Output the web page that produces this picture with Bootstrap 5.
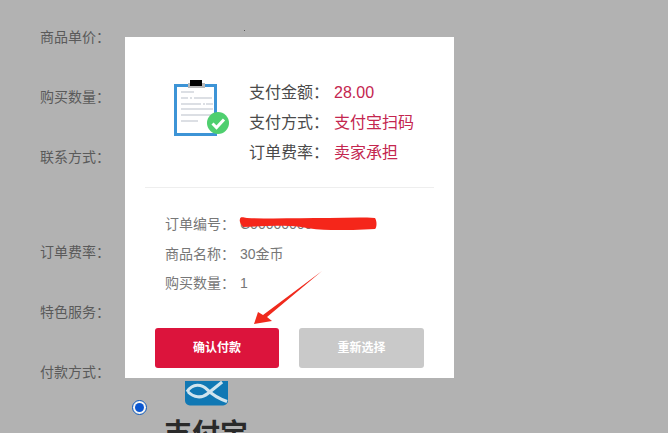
<!DOCTYPE html>
<html lang="zh">
<head>
<meta charset="utf-8">
<title>支付确认</title>
<link rel="stylesheet" href="https://cdn.jsdelivr.net/npm/bootstrap@5.3.0/dist/css/bootstrap.min.css">
<style>
html,body{height:433px;overflow:hidden}
body{background:#b2b2b2;font-family:"Liberation Sans","Noto Sans CJK SC",sans-serif;font-size:14px;position:relative}
.pg-form{padding:27px 0 0 40px;color:#5a5a5a}
.pg-row{height:20px;line-height:20px;margin-bottom:40px}
.pg-row-tall{margin-bottom:75px}
.pg-radio{position:absolute;left:132px;top:400px;width:15px;height:15px;border-radius:50%;border:1.5px solid #0b57b8;background:#f4f4f4;display:flex;align-items:center;justify-content:center}
.pg-radio i{display:block;width:9px;height:9px;border-radius:50%;background:#0b57d0}
.pg-logo{position:absolute;left:185px;top:381px;width:43px}
.pg-alipay{position:absolute;left:164px;top:417px;font-size:28px;font-weight:700;line-height:36px;color:#2a2a2a}
.pg-dot{position:absolute;left:244px;top:30px;width:1px;height:1px;background:#555}
.pg-modal{position:absolute;left:125px;top:37px;width:329px;height:341px;background:#fff;padding:0 20px}
.pg-head{height:151px;padding-top:41px;border-bottom:1px solid #eee}
.pg-clip{width:60px;height:56px;margin:2px 0 0 29px;flex:none}
.pg-sum{margin-left:15px;font-size:16px;color:#4a4a4a;line-height:30px;width:190px}
.pg-sum-k{width:85px;flex:none}
.pg-sum-v{color:#c4264f}
.pg-info{padding:22px 0 0 20px;color:#777;font-size:14px;line-height:29px;position:relative}
.pg-info-k{width:75px;flex:none}
.pg-rows>div{height:29.500px}
.pg-scrib{position:absolute;left:94px;top:29px;width:138px;height:14px}
.pg-arrow{position:absolute;left:120px;top:233px;width:80px;height:60px}
.pg-btns{position:absolute;left:30px;top:291px;width:269px;display:flex;justify-content:space-between}
.pg-btn{height:40px;border:0;border-radius:3px;color:#fff;font-size:12px;font-weight:700;padding:0}
.pg-btn-a{width:124px;background:#dc143c}
.pg-btn-b{width:125px;background:#c9c9c9}
</style>
</head>
<body>
<div class="pg-form">
  <div class="pg-row">商品单价：</div>
  <div class="pg-row">购买数量：</div>
  <div class="pg-row pg-row-tall">联系方式：</div>
  <div class="pg-row">订单费率：</div>
  <div class="pg-row">特色服务：</div>
  <div class="pg-row">付款方式：</div>
</div>
<span class="pg-dot"></span>
<span class="pg-radio"><i></i></span>
<svg class="pg-logo" viewBox="0 0 44 26" aria-hidden="true">
  <path d="M0 0H44V20a5 5 0 0 1-5 5H5a5 5 0 0 1-5-5Z" fill="#1078b4"/>
  <path d="M2 11C8 2 17 3 23 9c5 5 12 9 20 12M3 11c6 6 14 7 20 2C28 9 33 5 38 1" fill="none" stroke="#cfe4ee" stroke-width="3.2"/>
</svg>
<div class="pg-alipay">支付宝</div>

<div class="pg-modal">
  <div class="pg-head d-flex">
    <svg class="pg-clip" viewBox="0 0 60 56" aria-hidden="true">
      <rect x="1.500" y="5.500" width="40" height="49" fill="#fff" stroke="#3d94d6" stroke-width="3"/>
      <rect x="14" y="3" width="17" height="5" fill="#b9b9b9"/>
      <rect x="16" y="0" width="12" height="6" fill="#000"/>
      <g fill="#dcdfe4">
        <rect x="7" y="11" width="13" height="2"/><rect x="7" y="17" width="7" height="2"/><rect x="16" y="17" width="2" height="2"/><rect x="20" y="17" width="18" height="2"/>
        <rect x="7" y="23" width="20" height="2"/><rect x="29" y="23" width="2" height="2"/><rect x="32" y="23" width="7" height="2"/>
        <rect x="7" y="28" width="32" height="2"/><rect x="7" y="34" width="32" height="2"/><rect x="7" y="40" width="17" height="2"/>
      </g>
      <circle cx="44" cy="43" r="11" fill="#4fcf6f"/>
      <path d="M38.500 43.500l4 4 7.500-8" fill="none" stroke="#fff" stroke-width="3"/>
    </svg>
    <div class="pg-sum">
      <div class="d-flex"><span class="pg-sum-k">支付金额：</span><span class="pg-sum-v">28.00</span></div>
      <div class="d-flex"><span class="pg-sum-k">支付方式：</span><span class="pg-sum-v">支付宝扫码</span></div>
      <div class="d-flex"><span class="pg-sum-k">订单费率：</span><span class="pg-sum-v">卖家承担</span></div>
    </div>
  </div>
  <div class="pg-info">
    <div class="pg-rows">
      <div class="d-flex"><span class="pg-info-k">订单编号：</span><span>C0000000000000000</span></div>
      <div class="d-flex"><span class="pg-info-k">商品名称：</span><span>30金币</span></div>
      <div class="d-flex"><span class="pg-info-k">购买数量：</span><span>1</span></div>
    </div>
    <svg class="pg-scrib" viewBox="0 0 138 14" aria-hidden="true">
      <path d="M1 2C1 0 3 0 8 1 35 2 60 1 90 1c15 0 30-1 46 0 2 3 2 9 0 11-14 1-30 1-44 1-10 0-20-1-30-3-18-2-38-1-58 0C2 7 0 5 1 2Z" fill="#f5261a"/>
    </svg>
  </div>
  <div class="pg-btns">
    <button type="button" class="btn pg-btn pg-btn-a">确认付款</button>
    <button type="button" class="btn pg-btn pg-btn-b">重新选择</button>
  </div>
  <svg class="pg-arrow" viewBox="0 0 80 60" aria-hidden="true">
    <path d="M77 1L22 47l5 4L9 54l4-12 5 3Z" fill="#f02a1d"/>
  </svg>
</div>
<script src="https://cdn.jsdelivr.net/npm/bootstrap@5.3.0/dist/js/bootstrap.bundle.min.js"></script>
</body>
</html>
